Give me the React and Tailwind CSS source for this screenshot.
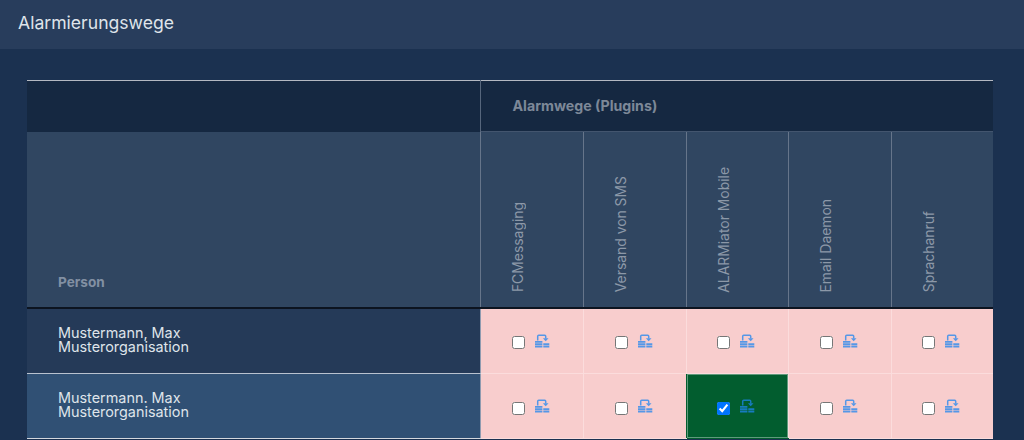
import React from 'react';

const plugins = ['FCMessaging', 'Versand von SMS', 'ALARMiator Mobile', 'Email Daemon', 'Sprachanruf'];

const rows = [
  { name: 'Mustermann, Max', org: 'Musterorganisation', rowClass: 'bg-[#253a58] border-[#b9c2cf] h-[66px]', active: -1 },
  { name: 'Mustermann. Max', org: 'Musterorganisation', rowClass: 'bg-[#305074] border-[#d3d7dd] h-[65px]', active: 2 },
];

const RouteIcon = () => (
  <svg width="15" height="14" viewBox="0 0 15 14" className="text-[#1f86f0] opacity-75 shrink-0">
    <path d="M2.7 6.4V2.2Q2.7 1.2 3.7 1.2H9.7Q10.7 1.2 10.7 2.2V4.5" fill="none" stroke="currentColor" strokeWidth="1.5" />
    <path d="M7.9 4.2H13.5L10.7 7.2Z" fill="currentColor" />
    <path d="M0 7h7.4v1.7H0zM0 9.3h7.4V11H0zM0 11.6h7.4v1.8H0zM8.3 9.3h6V11h-6zM8.3 11.6h6v1.8h-6z" fill="currentColor" />
  </svg>
);

const App = () => {
  return (
    <div className="w-[1024px] h-[440px] overflow-hidden bg-[#1b3150] font-['Inter',sans-serif]">
      <div className="h-[49px] bg-[#283d5c] flex items-center pl-[18px] pb-[3px]">
        <h1 className="text-[17.6px] text-[#dfe4ea]">Alarmierungswege</h1>
      </div>

      <div className="pt-[31px] pl-[27px]">
        <table className="w-[966px] table-fixed border-collapse border-t border-[#b4b9c2]">
          <colgroup>
            <col className="w-[453px]" />
            <col className="w-[103px]" />
            <col className="w-[103px]" />
            <col className="w-[102px]" />
            <col className="w-[103px]" />
            <col className="w-[102px]" />
          </colgroup>
          <thead>
            <tr className="bg-[#152841] h-[51px]">
              <th></th>
              <th colSpan={5} className="border-l border-[#56667c] pl-[32px] text-left text-[14.2px] font-bold text-[#7d8898] align-middle pb-[1px]">
                Alarmwege (Plugins)
              </th>
            </tr>
            <tr className="bg-[#304661] h-[176px] border-b-2 border-[#0c1420]">
              <th className="pl-[31px] pb-[14px] text-left align-bottom text-[13.6px] font-bold text-[#8290a3]">Person</th>
              {plugins.map((plugin) => (
                <th key={plugin} className="border-l border-l-[#66758a] border-t border-t-[#43556e] pl-[29px] pb-[8px] text-left align-bottom">
                  <span className="inline-block rotate-180 [writing-mode:vertical-rl] text-[13.9px] leading-[17px] font-normal text-[#8c98a8]">
                    {plugin}
                  </span>
                </th>
              ))}
            </tr>
          </thead>
          <tbody>
            {rows.map((row) => (
              <tr key={row.name}>
                <td className={`${row.rowClass} border-b pl-[31px] text-[14.4px] leading-[14px] text-[#dfe4ea] pb-[2px]`}>
                  <div>{row.name}</div>
                  <div>{row.org}</div>
                </td>
                {plugins.map((plugin, i) => (
                  <td
                    key={plugin}
                    className={`border-l border-b ${i === row.active ? 'bg-[#025d2f] border-[#025d2f] shadow-[inset_0_0_0_1px_#5f9a7c]' : 'bg-[#f8cdcd] border-[#fbdcdc]'} ${i === 0 ? 'border-l-[#8f9bb0]' : ''}`}
                  >
                    <div className="flex items-center justify-center gap-[10px] pr-[2px]">
                      <input type="checkbox" defaultChecked={i === row.active} className="w-[13px] h-[13px] m-0 translate-y-[2px]" />
                      <RouteIcon />
                    </div>
                  </td>
                ))}
              </tr>
            ))}
          </tbody>
        </table>
      </div>
    </div>
  );
};

export default App;
